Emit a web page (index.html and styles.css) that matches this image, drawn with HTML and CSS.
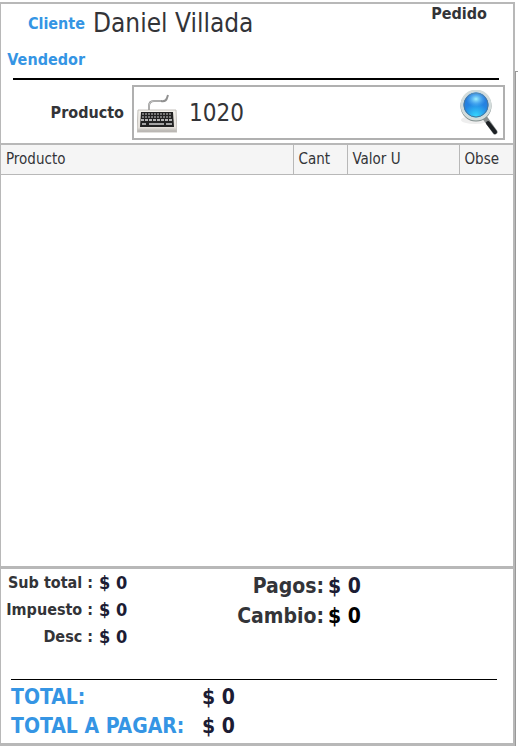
FILE: index.html
```html
<!DOCTYPE html>
<html lang="es">
<head>
    <meta charset="utf-8">
    <meta name="viewport" content="width=device-width, initial-scale=1">
    <title>Pedido</title>
    <link rel="stylesheet" href="styles.css">
</head>
<body>
    <main class="panel">
        <header class="order-header">
            <div class="people">
                <span class="link-label">Cliente</span>
                <span class="client-name">Daniel Villada</span>
                <span class="link-label">Vendedor</span>
                <span></span>
            </div>
            <h1 class="order-title">Pedido</h1>
        </header>
        <hr class="rule rule-thick">

        <form class="product-form">
            <label for="product">Producto</label>
            <div class="product-box">
                <button type="button" class="icon-button" aria-label="Teclado">
                    <svg width="40" height="40" viewBox="0 0 40 40">
                        <defs>
                            <linearGradient id="caseFill" x1="0" y1="0" x2="0" y2="1">
                                <stop offset="0" stop-color="#f4f2ed"/>
                                <stop offset="0.8" stop-color="#e4e0da"/>
                                <stop offset="1" stop-color="#aaa8a5"/>
                            </linearGradient>
                        </defs>
                        <path d="M12 17 V13 Q12 8 17 8 H24 Q29 9 30 5 L31 2" fill="none" stroke="#909090" stroke-width="2"/>
                        <path d="M12 16 V13 Q12 8 17 8 H24" fill="none" stroke="#c8c8c8" stroke-width="1"/>
                        <path d="M1 17 H39 L40 39 H0 Z" fill="url(#caseFill)" stroke="#c4c1bc" stroke-width="1"/>
                        <path d="M4 19 H36 L37 34 H3 Z" fill="#222"/>
                        <path d="M5 21 H35 M5 24 H35" stroke="#777" stroke-width="2" stroke-dasharray="2 1"/>
                        <path d="M4 27 H36" stroke="#b4b4b4" stroke-width="2" stroke-dasharray="3 1"/>
                        <path d="M5 31 H9 M12 31 H27 M29 31 H35" stroke="#a4a4a4" stroke-width="2"/>
                    </svg>
                </button>
                <input type="text" id="product" value="1020">
                <button type="submit" class="icon-button" aria-label="Buscar">
                    <svg width="40" height="46" viewBox="0 0 40 46">
                        <defs>
                            <radialGradient id="lensFill" cx="0.5" cy="0.9" r="0.85">
                                <stop offset="0" stop-color="#35d8ff"/>
                                <stop offset="0.55" stop-color="#2384e2"/>
                                <stop offset="1" stop-color="#2a78d8"/>
                            </radialGradient>
                            <radialGradient id="lensShine">
                                <stop offset="0" stop-color="#a0f4ff"/>
                                <stop offset="1" stop-color="#58baff" stop-opacity="0"/>
                            </radialGradient>
                        </defs>
                        <ellipse cx="16" cy="30" rx="14" ry="4" fill="#eee"/>
                        <path d="M26 28 L36 42" stroke="#8a8f8f" stroke-width="5" stroke-linecap="round"/>
                        <path d="M29 33 L36 42" stroke="#1c2024" stroke-width="4" stroke-linecap="round"/>
                        <circle cx="17" cy="16" r="14" fill="none" stroke="#7e8c8c" stroke-width="3"/>
                        <circle cx="17" cy="15" r="14" fill="url(#lensFill)" stroke="#d3dcdb" stroke-width="3"/>
                        <circle cx="17" cy="15" r="12" fill="none" stroke="#4b7799" stroke-width="1"/>
                        <ellipse cx="17" cy="9" rx="10" ry="8" fill="url(#lensShine)"/>
                    </svg>
                </button>
            </div>
        </form>

        <section class="items">
            <table>
                <thead>
                    <tr>
                        <th>Producto</th>
                        <th class="col-small">Cant</th>
                        <th class="col-value">Valor U</th>
                        <th class="col-small">Obse</th>
                    </tr>
                </thead>
                <tbody></tbody>
            </table>
        </section>

        <footer class="summary">
            <div class="amounts">
                <dl class="breakdown">
                    <dt>Sub total :</dt>
                    <dd>$ 0</dd>
                    <dt>Impuesto :</dt>
                    <dd>$ 0</dd>
                    <dt>Desc :</dt>
                    <dd>$ 0</dd>
                </dl>
                <dl class="payments">
                    <dt>Pagos:</dt>
                    <dd>$ 0</dd>
                    <dt>Cambio:</dt>
                    <dd class="change">$ 0</dd>
                </dl>
            </div>
            <hr class="rule">
            <dl class="totals">
                <dt>TOTAL:</dt>
                <dd>$ 0</dd>
                <dt>TOTAL A PAGAR:</dt>
                <dd>$ 0</dd>
            </dl>
        </footer>
    </main>
    <aside class="next-panel"></aside>
</body>
</html>
```

FILE: styles.css
```css
* {
    box-sizing: border-box;
}
body {
    margin: 0;
    min-height: 100vh;
    padding: 2px 0 1px;
    display: grid;
    grid-template-columns: minmax(0, 1fr) 3px;
    background-color: white;
    color: #333438;
    font-family: "DejaVu Sans Condensed", Tahoma, "DejaVu Sans", sans-serif;
    font-size: 16px;
}
dl, dd, h1 {
    margin: 0;
}
.panel {
    display: flex;
    flex-direction: column;
    border: solid #b8b8b8;
    border-width: 2px 2px 3px 1px;
}
.next-panel {
    margin-top: 69px;
    border-top: 1px solid #999;
    border-left: 1px solid #999;
}

/* header */
.order-header {
    display: flex;
    justify-content: space-between;
    height: 74px;
    padding-right: 26px;
}
.people {
    display: grid;
    grid-template-columns: 84px auto;
    grid-template-rows: 38px 34px;
    column-gap: 8px;
    align-items: center;
    text-align: right;
}
.link-label {
    color: #3595e4;
    font-weight: bold;
}
.client-name {
    font-size: 26px;
}
.order-title {
    font-size: 16px;
    line-height: 20px;
}
.rule {
    width: auto;
    margin: 0 16px 0 10px;
    border: 0;
    border-top: 1px solid black;
}
.rule-thick {
    margin: 0 14px 0 12px;
    border-top-width: 2px;
}

/* product search */
.product-form {
    display: flex;
    align-items: center;
    gap: 8px;
    padding: 5px 8px 3px 0;
}
.product-form label {
    width: 123px;
    text-align: right;
    font-weight: bold;
}
.product-box {
    flex: 1;
    display: flex;
    align-items: center;
    min-width: 0;
    height: 55px;
    padding: 0 4px 0 3px;
    border: 2px solid #b0b0b0;
}
.product-box input {
    flex: 1;
    min-width: 0;
    padding: 0 12px;
    border: none;
    outline: none;
    color: inherit;
    font-family: inherit;
    font-size: 24px;
}
.icon-button {
    display: flex;
    padding: 0;
    border: none;
    background: none;
    cursor: pointer;
}

/* items table */
.items {
    flex: 1;
    border-top: 2px solid #b8b8b8;
    border-bottom: 3px solid #b8b8b8;
}
table {
    width: 100%;
    table-layout: fixed;
    border-collapse: collapse;
}
th {
    height: 29px;
    padding: 0 5px;
    border-bottom: 1px solid #b8b8b8;
    border-left: 1px solid #b8b8b8;
    background-color: #f5f5f5;
    font-size: 15px;
    font-weight: normal;
    text-align: left;
}
th:first-child {
    border-left: none;
}
.col-small {
    width: 54px;
}
.col-value {
    width: 112px;
}

/* totals */
.amounts {
    display: flex;
    gap: 110px;
    height: 110px;
}
.summary dl {
    display: grid;
    align-content: start;
    font-weight: bold;
}
.summary dd {
    color: #1c1c34;
}
.breakdown {
    grid-template-columns: 92px auto;
    grid-auto-rows: 27px;
    column-gap: 6px;
    align-items: center;
    text-align: right;
}
.breakdown dd {
    font-size: 18px;
}
.payments {
    grid-template-columns: auto auto;
    grid-auto-rows: 30px;
    column-gap: 4px;
    align-items: center;
    padding-top: 2px;
    font-size: 21px;
    text-align: right;
}
.summary .change {
    color: black;
}
.totals {
    grid-template-columns: 191px auto;
    grid-auto-rows: 29px;
    align-items: center;
    padding: 2px 0 3px 10px;
    font-size: 21px;
}
.totals dt {
    color: #3595e4;
}
```
